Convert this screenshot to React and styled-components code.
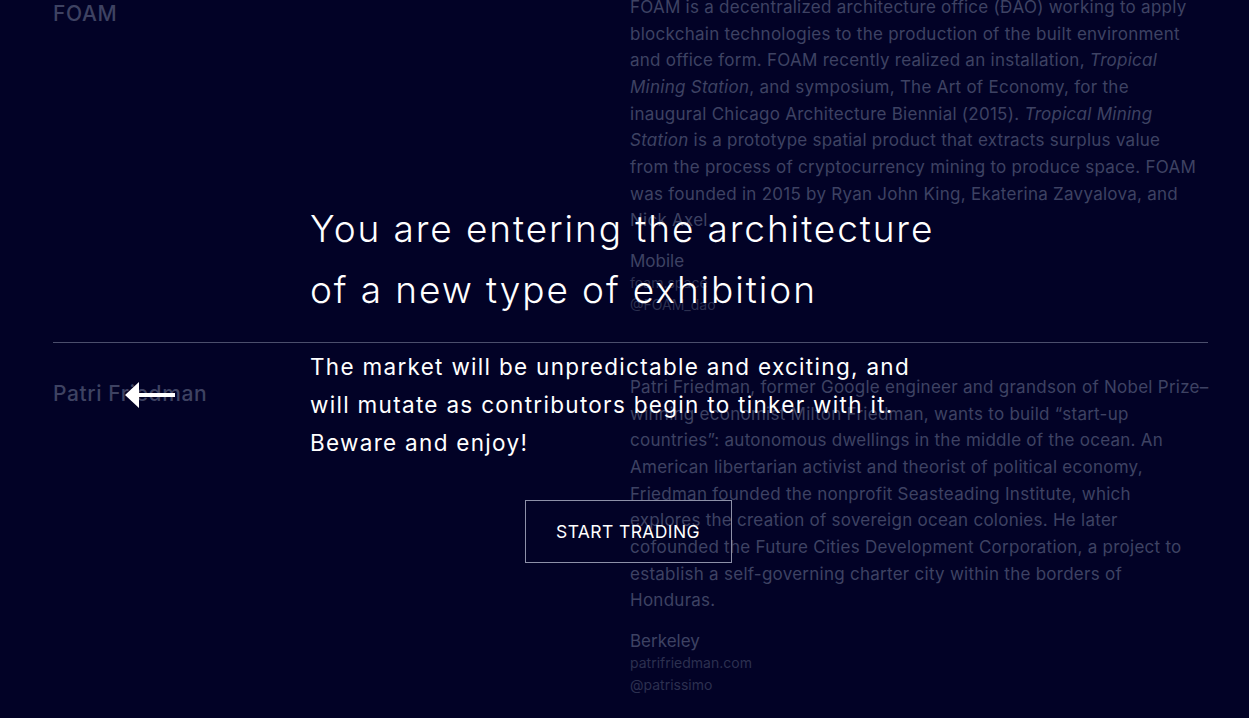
import React from "react";
import styled, { createGlobalStyle } from "styled-components";

const Global = createGlobalStyle`
  html, body { margin: 0; padding: 0; background: #020226; overflow: hidden; }
  body { font-family: Inter, "Noto Sans", "Liberation Sans", sans-serif; }
  * { box-sizing: border-box; }
`;

const Page = styled.div`
  width: 1249px;
  height: 718px;
  overflow: hidden;
  position: relative;
  background: #020226;
`;

const List = styled.div`
  margin-top: -38px;
  padding: 0 41px 0 53px;
`;

const Section = styled.section`
  display: grid;
  grid-template-columns: 577px 1fr;
  border-top: 1px solid #4b4e6c;
  padding: 31px 0 26px;
`;

const Name = styled.h2`
  margin: 8px 0 0;
  font-size: 21px;
  font-weight: 500;
  line-height: 24px;
  color: #3e4262;
  letter-spacing: 0.6px;
`;

const Bio = styled.p`
  margin: 0;
  font-size: 17px;
  line-height: 26.65px;
  color: #3e4263;
  letter-spacing: 0.26px;
  white-space: nowrap;
  em { font-style: italic; }
`;

const City = styled.div`
  margin-top: 16px;
  font-size: 17px;
  line-height: 22px;
  color: #3e4263;
`;

const Link = styled.div`
  font-size: 14px;
  line-height: 22px;
  color: #2c3050;
`;

const Overlay = styled.div`
  position: absolute;
  inset: 0;
  display: flex;
  justify-content: center;
  padding: 198px 0 0 7px;
`;

const Modal = styled.div`
  width: 636px;
  display: flex;
  flex-direction: column;
  color: #fff;
`;

const Title = styled.h1`
  margin: 0;
  font-size: 37px;
  font-weight: 300;
  line-height: 61px;
  letter-spacing: 1.9px;
  white-space: nowrap;
`;

const Lead = styled.p`
  margin: 28px 0 0;
  font-size: 22.5px;
  font-weight: 400;
  line-height: 38px;
  letter-spacing: 1.3px;
  white-space: nowrap;
`;

const StartButton = styled.button`
  align-self: center;
  margin-top: 38px;
  width: 207px;
  height: 63px;
  background: transparent;
  border: 1px solid #8d90a8;
  color: #fff;
  font-family: inherit;
  font-size: 17.5px;
  font-weight: 400;
  letter-spacing: 0.4px;
  cursor: pointer;
`;

const Cursor = styled.svg`
  position: absolute;
  left: 124px;
  top: 381px;
`;

const people = [
  {
    name: "FOAM",
    bio: [
      "FOAM is a decentralized architecture office (ĐAO) working to apply",
      "blockchain technologies to the production of the built environment",
      <>and office form. FOAM recently realized an installation, <em>Tropical</em></>,
      <><em>Mining Station</em>, and symposium, The Art of Economy, for the</>,
      <>inaugural Chicago Architecture Biennial (2015). <em>Tropical Mining</em></>,
      <><em>Station</em> is a prototype spatial product that extracts surplus value</>,
      "from the process of cryptocurrency mining to produce space. FOAM",
      "was founded in 2015 by Ryan John King, Ekaterina Zavyalova, and",
      "Nick Axel.",
    ],
    city: "Mobile",
    links: ["foam.space", "@FOAM_dao"],
  },
  {
    name: "Patri Friedman",
    bio: [
      "Patri Friedman, former Google engineer and grandson of Nobel Prize–",
      "winning economist Milton Friedman, wants to build “start-up",
      "countries”: autonomous dwellings in the middle of the ocean. An",
      "American libertarian activist and theorist of political economy,",
      "Friedman founded the nonprofit Seasteading Institute, which",
      "explores the creation of sovereign ocean colonies. He later",
      "cofounded the Future Cities Development Corporation, a project to",
      "establish a self-governing charter city within the borders of",
      "Honduras.",
    ],
    city: "Berkeley",
    links: ["patrifriedman.com", "@patrissimo"],
  },
];

export default function App() {
  return (
    <Page>
      <Global />
      <List>
        {people.map((p) => (
          <Section key={p.name}>
            <Name>{p.name}</Name>
            <div>
              <Bio>
                {p.bio.map((line, i) => (
                  <React.Fragment key={i}>
                    {line}
                    {i < p.bio.length - 1 && <br />}
                  </React.Fragment>
                ))}
              </Bio>
              <City>{p.city}</City>
              {p.links.map((l) => (
                <Link key={l}>{l}</Link>
              ))}
            </div>
          </Section>
        ))}
      </List>
      <Overlay>
        <Modal>
          <Title>
            You are entering the architecture
            <br />
            of a new type of exhibition
          </Title>
          <Lead>
            The market will be unpredictable and exciting, and
            <br />
            will mutate as contributors begin to tinker with it.
            <br />
            Beware and enjoy!
          </Lead>
          <StartButton>START TRADING</StartButton>
        </Modal>
      </Overlay>
      <Cursor width="54" height="28" viewBox="0 0 54 28">
        <path d="M1 14 L15 1 L15 12 L51 12 L51 16 L15 16 L15 27 Z" fill="#fff" />
      </Cursor>
    </Page>
  );
}
